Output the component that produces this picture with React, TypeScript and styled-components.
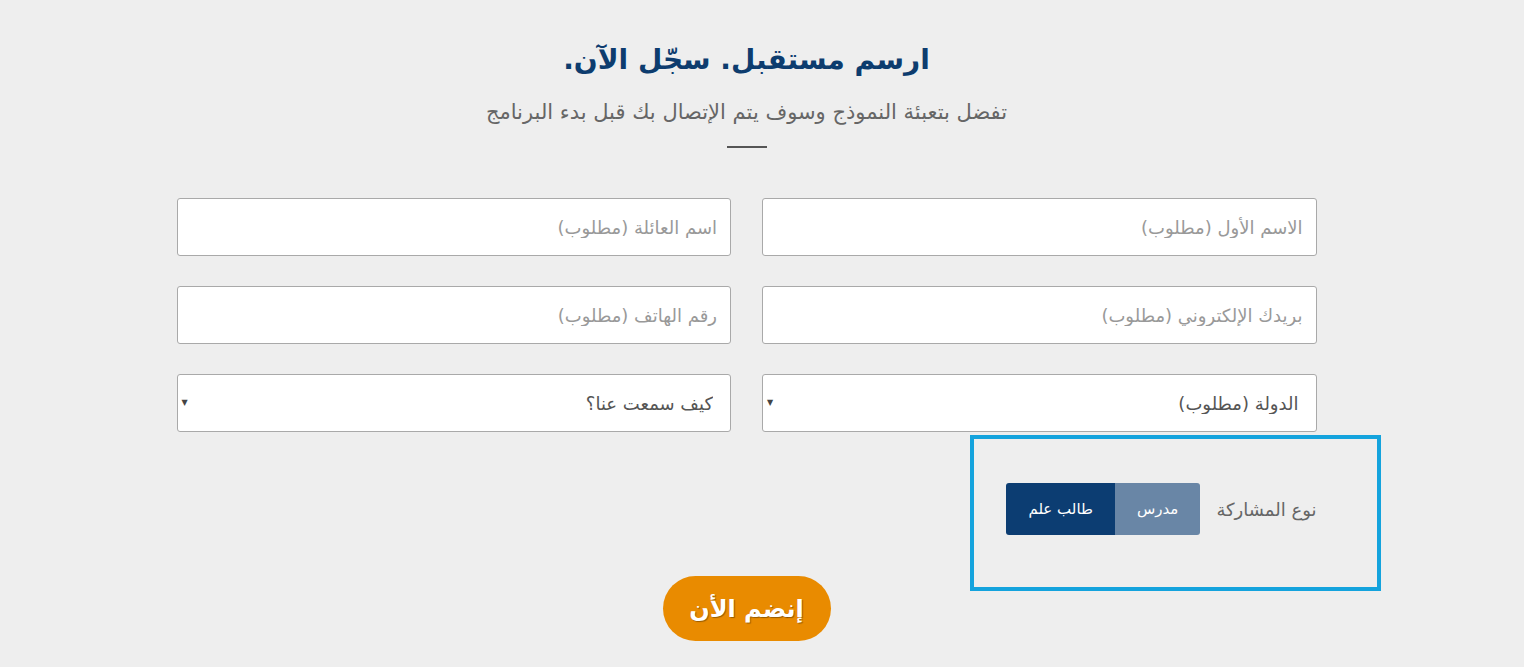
import React, {useState} from "react";
import styled, {createGlobalStyle} from "styled-components";

const GlobalStyle = createGlobalStyle`
    html, body {
        margin: 0;
        padding: 0;
        background: #eeeeee;
    }
    body {
        font-family: "DejaVu Sans", "Noto Sans", sans-serif;
    }
`;

const Page = styled.div`
    direction: rtl;
    min-height: 667px;
    padding: 40px 31px 0 0;
    box-sizing: border-box;
    display: flex;
    flex-direction: column;
    align-items: center;
`;
const Title = styled.h2`
    margin: 0;
    font-size: 28px;
    font-weight: bold;
    color: #0d3c6e;
    line-height: 40px;
`;
const Subtitle = styled.p`
    margin: 17px 0 0 0;
    font-size: 21px;
    color: #666;
    line-height: 30px;
`;
const Line = styled.div`
    width: 40px;
    height: 2px;
    background: #555;
    margin-top: 19px;
`;
const Form = styled.form`
    width: 1140px;
    margin-top: 50px;
    display: grid;
    grid-template-columns: 1fr 1fr;
    column-gap: 31px;
    row-gap: 30px;
`;
const Field = styled.input`
    height: 58px;
    box-sizing: border-box;
    border: 1px solid #a9a9a9;
    border-radius: 3px;
    background: #fff;
    padding: 0 13px;
    font-family: inherit;
    font-size: 18px;
    color: #555;
    outline: none;
    &::placeholder {
        color: #999;
    }
`;
const SelectWrap = styled.div`
    position: relative;
`;
const Select = styled.select`
    width: 100%;
    height: 58px;
    box-sizing: border-box;
    border: 1px solid #a9a9a9;
    border-radius: 3px;
    background: #fff;
    padding: 0 17px 0 30px;
    font-family: inherit;
    font-size: 18px;
    color: #555;
    appearance: none;
    outline: none;
`;
const Arrow = styled.span`
    position: absolute;
    left: 5px;
    top: 50%;
    transform: translateY(-55%);
    font-size: 8px;
    color: #444;
    pointer-events: none;
`;
const TypeRow = styled.div`
    position: relative;
    display: flex;
    align-items: center;
    gap: 16px;
    margin-top: 21px;
    justify-self: start;
`;
const TypeLabel = styled.span`
    font-size: 18px;
    color: #666;
`;
const Toggle = styled.div`
    display: flex;
    border-radius: 3px;
    overflow: hidden;
`;
const ToggleButton = styled.button<{ $active: boolean }>`
    height: 52px;
    border: none;
    padding: 0 22px;
    font-family: inherit;
    font-size: 15px;
    color: #fff;
    cursor: pointer;
    background: ${p => p.$active ? '#0c3d72' : '#6986a6'};
`;
const Highlight = styled.div`
    position: absolute;
    top: -48px;
    bottom: -56px;
    right: -64px;
    left: -36px;
    border: 4px solid #14a3dd;
    pointer-events: none;
`;
const Spacer = styled.div``;
const Submit = styled.button`
    margin-top: 41px;
    width: 168px;
    height: 65px;
    border: none;
    border-radius: 33px;
    background: #e98b00;
    color: #fff;
    font-family: inherit;
    font-size: 24px;
    font-weight: bold;
    text-shadow: 1px 1px 1px rgba(0, 0, 0, 0.35);
    cursor: pointer;
`;

export default function App() {
    const [type, setType] = useState('student');
    return (
        <Page>
            <GlobalStyle/>
            <Title>ارسم مستقبل. سجّل الآن.</Title>
            <Subtitle>تفضل بتعبئة النموذج وسوف يتم الإتصال بك قبل بدء البرنامج</Subtitle>
            <Line/>
            <Form onSubmit={e => e.preventDefault()}>
                <Field placeholder="الاسم الأول (مطلوب)"/>
                <Field placeholder="اسم العائلة (مطلوب)"/>
                <Field placeholder="بريدك الإلكتروني (مطلوب)"/>
                <Field placeholder="رقم الهاتف (مطلوب)"/>
                <SelectWrap>
                    <Select defaultValue="">
                        <option value="">الدولة (مطلوب)</option>
                    </Select>
                    <Arrow>▼</Arrow>
                </SelectWrap>
                <SelectWrap>
                    <Select defaultValue="">
                        <option value="">كيف سمعت عنا؟</option>
                    </Select>
                    <Arrow>▼</Arrow>
                </SelectWrap>
                <TypeRow>
                    <TypeLabel>نوع المشاركة</TypeLabel>
                    <Toggle>
                        <ToggleButton type="button" $active={type === 'teacher'}
                                      onClick={() => setType('teacher')}>مدرس</ToggleButton>
                        <ToggleButton type="button" $active={type === 'student'}
                                      onClick={() => setType('student')}>طالب علم</ToggleButton>
                    </Toggle>
                    <Highlight/>
                </TypeRow>
                <Spacer/>
            </Form>
            <Submit type="button">إنضم الأن</Submit>
        </Page>
    );
}
